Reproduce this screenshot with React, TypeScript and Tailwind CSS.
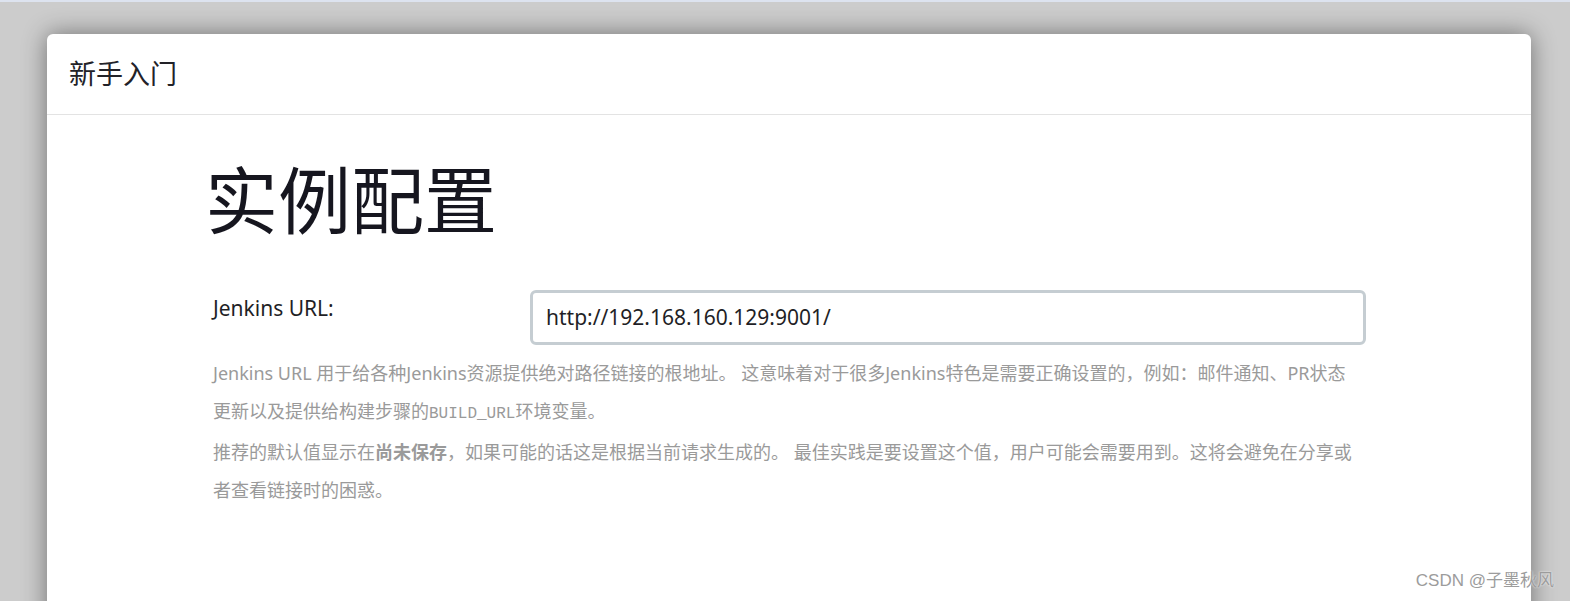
export default function App() {
  const sans = { fontFamily: '"Noto Sans", "Noto Sans CJK SC", sans-serif' }

  return (
    <div className="relative h-[601px] w-[1570px] overflow-hidden bg-[#cccccc]" style={sans}>
      <div className="h-[2px] bg-[#dde3ef]" />

      <div className="pl-[47px] pr-[39px] pt-[32px]">
        <div className="h-[600px] rounded-t-[6px] bg-white shadow-[0_0_24px_rgba(0,0,0,0.45)]">
          <header className="flex h-[81px] items-center border-b border-[#e3e3e3] px-[22px]">
            <h2 className="text-[27px] text-[#222228]">新手入门</h2>
          </header>

          <div className="w-[1320px] pl-[158px] pt-[41px]">
            <h1 className="text-[73px] leading-[1.2] text-[#16161f]">实例配置</h1>

            <div className="mt-[46px] pl-[8px]">
              <div className="flex items-start">
                <label className="w-[317px] pt-[3px] text-[21px] text-[#1f1f26]">Jenkins URL:</label>
                <input
                  className="h-[55px] w-[836px] rounded-[6px] border-[3px] border-[#c5cdd2] px-[13px] text-[21px] text-[#1f1f26] outline-none"
                  defaultValue="http://192.168.160.129:9001/"
                />
              </div>

              <div className="mt-[9px] w-[1150px] text-[18px] leading-[38px] text-[#9a9a9a]">
                <p>
                  Jenkins URL 用于给各种Jenkins资源提供绝对路径链接的根地址。 这意味着对于很多Jenkins特色是需要正确设置的，例如：邮件通知、PR状态更新以及提供给构建步骤的
                  <code className="text-[16px]" style={{ fontFamily: '"Liberation Mono", monospace' }}>BUILD_URL</code>
                  环境变量。
                </p>
                <p>
                  推荐的默认值显示在<strong className="font-bold">尚未保存</strong>，如果可能的话这是根据当前请求生成的。 最佳实践是要设置这个值，用户可能会需要用到。这将会避免在分享或者查看链接时的困惑。
                </p>
              </div>
            </div>
          </div>
        </div>
      </div>

      <div
        className="absolute bottom-[8px] right-[16px] text-[17px] text-[#9c9c9c]"
        style={{ fontFamily: '"Liberation Sans", "Noto Sans CJK SC", sans-serif', textShadow: '0 0 2px #fff' }}
      >
        CSDN @子墨秋风
      </div>
    </div>
  )
}
